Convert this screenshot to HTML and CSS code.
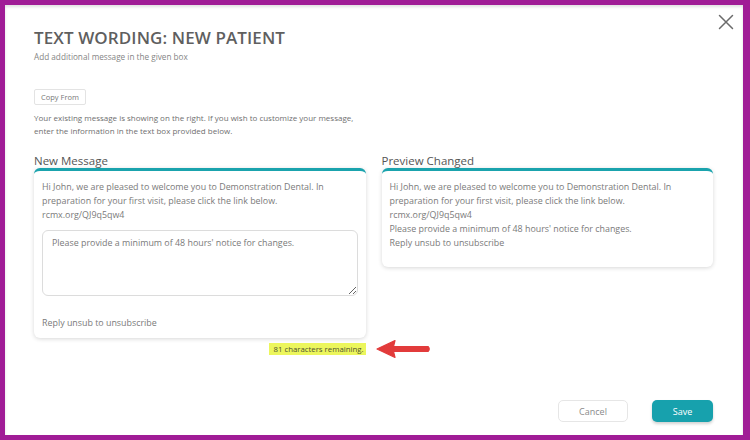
FILE: index.html
```html
<!DOCTYPE html>
<html lang="en">
<head>
<meta charset="utf-8">
<title>Text Wording: New Patient</title>
<link rel="stylesheet" href="styles.css">
</head>
<body>
<div class="modal">
  <button class="close" aria-label="Close">
    <svg width="16" height="16" viewBox="0 0 16 16"><path d="M1.5 1.5 L14.5 14.5 M14.5 1.5 L1.5 14.5" stroke="#6b6b6b" stroke-width="1.5" fill="none" stroke-linecap="round"/></svg>
  </button>
  <h1 class="title">TEXT WORDING: NEW PATIENT</h1>
  <p class="subtitle">Add additional message in the given box</p>
  <button class="copy-btn">Copy From</button>
  <p class="intro">Your existing message is showing on the right. If you wish to customize your message,<br>enter the information in the text box provided below.</p>
  <div class="columns">
    <div class="col">
      <h2 class="col-label">New Message</h2>
      <div class="card card-edit">
        <p class="msg">Hi John, we are pleased to welcome you to Demonstration Dental. In preparation for your first visit, please click the link below.<br>rcmx.org/QJ9q5qw4</p>
        <textarea class="input" placeholder="Please provide a minimum of 48 hours' notice for changes."></textarea>
        <p class="msg footer-msg">Reply unsub to unsubscribe</p>
      </div>
      <div class="remaining-row">
        <span class="remaining">81 characters remaining.</span>
        <svg class="arrow" width="58" height="22" viewBox="0 0 58 22"><path d="M3 11 L21 2.5 L19.5 8.5 L54 8.5 Q56.5 11 54 13.5 L19.5 13.5 L21 19.5 Z" fill="#e23b3b" stroke="#e23b3b" stroke-width="1.2" stroke-linejoin="round"/></svg>
      </div>
    </div>
    <div class="col">
      <h2 class="col-label">Preview Changed</h2>
      <div class="card card-preview">
        <p class="msg">Hi John, we are pleased to welcome you to Demonstration Dental. In preparation for your first visit, please click the link below.<br>rcmx.org/QJ9q5qw4<br>Please provide a minimum of 48 hours' notice for changes.<br>Reply unsub to unsubscribe</p>
      </div>
    </div>
  </div>
  <div class="actions">
    <button class="btn btn-cancel">Cancel</button>
    <button class="btn btn-save">Save</button>
  </div>
</div>
</body>
</html>
```

FILE: styles.css
```css
* { box-sizing: border-box; }
html, body { margin: 0; padding: 0; }
body {
  width: 750px;
  height: 440px;
  background: #a01c96;
  padding: 5px 7px 5px 5px;
  font-family: "Open Sans", "Noto Sans", sans-serif;
  color: #6f6f6f;
  overflow: hidden;
}
.modal {
  position: relative;
  height: 430px;
  background: #fff;
  padding: 22px 30px 13px 29px;
  display: flex;
  flex-direction: column;
  box-shadow: inset 0 2px 3px rgba(0,0,0,0.12);
}
.close {
  position: absolute;
  top: 7px;
  right: 7px;
  width: 20px;
  height: 20px;
  padding: 2px;
  border: 0;
  background: none;
}
.title {
  margin: 0;
  font-size: 17px;
  line-height: 22px;
  font-weight: 600;
  color: #5f5f5f;
  letter-spacing: 0.1px;
}
.subtitle {
  margin: 2px 0 0;
  font-size: 8.2px;
  line-height: 12px;
  color: #858585;
}
.copy-btn {
  align-self: flex-start;
  margin-top: 26px;
  height: 16px;
  padding: 0 6px;
  font-family: inherit;
  font-size: 7.5px;
  color: #777;
  background: #fff;
  border: 1px solid #e3e3e3;
  border-radius: 2px;
}
.intro {
  margin: 7px 0 0;
  font-size: 8px;
  line-height: 12.5px;
  color: #6f6f6f;
}
.columns {
  display: grid;
  grid-template-columns: 1fr 1fr;
  column-gap: 16px;
  margin-top: 17px;
}
.col { display: flex; flex-direction: column; }
.col-label {
  margin: 0;
  font-size: 11.5px;
  line-height: 14px;
  font-weight: 400;
  color: #555;
}
.card {
  border-top: 3px solid #1aa3ad;
  border-radius: 6px;
  background: #fff;
  box-shadow: 0 1px 4px rgba(0,0,0,0.16);
  padding: 9px 8px 0;
}
.msg {
  margin: 0;
  font-size: 8.9px;
  line-height: 14px;
  color: #7a7a7a;
}
.input {
  display: block;
  width: 100%;
  height: 66px;
  margin-top: 8px;
  padding: 5px 9px;
  font-family: inherit;
  font-size: 8.9px;
  line-height: 14px;
  color: #777;
  border: 1px solid #dcdcdc;
  border-radius: 6px;
  resize: vertical;
}
.input::placeholder { color: #7a7a7a; }
.footer-msg { margin-top: 20px; padding-bottom: 8px; }
.card-preview { padding-bottom: 17px; }
.remaining-row {
  position: relative;
  display: flex;
  justify-content: flex-end;
  margin-top: 5px;
}
.remaining {
  background: #ecf65c;
  color: #4e5230;
  font-size: 7.8px;
  line-height: 12px;
  padding: 0 2px 0 4px;
}
.arrow {
  position: absolute;
  left: calc(100% + 8px);
  top: -5px;
}
.actions {
  margin-top: auto;
  display: flex;
  justify-content: flex-end;
  gap: 24px;
}
.btn {
  height: 22px;
  font-family: inherit;
  font-size: 9px;
  border-radius: 5px;
}
.btn-cancel {
  width: 70px;
  background: #fff;
  color: #8a8a8a;
  border: 1px solid #e6e6e6;
}
.btn-save {
  width: 61px;
  background: #17a1ad;
  color: #fff;
  border: 0;
  box-shadow: 0 2px 3px rgba(0,0,0,0.18);
}
```
